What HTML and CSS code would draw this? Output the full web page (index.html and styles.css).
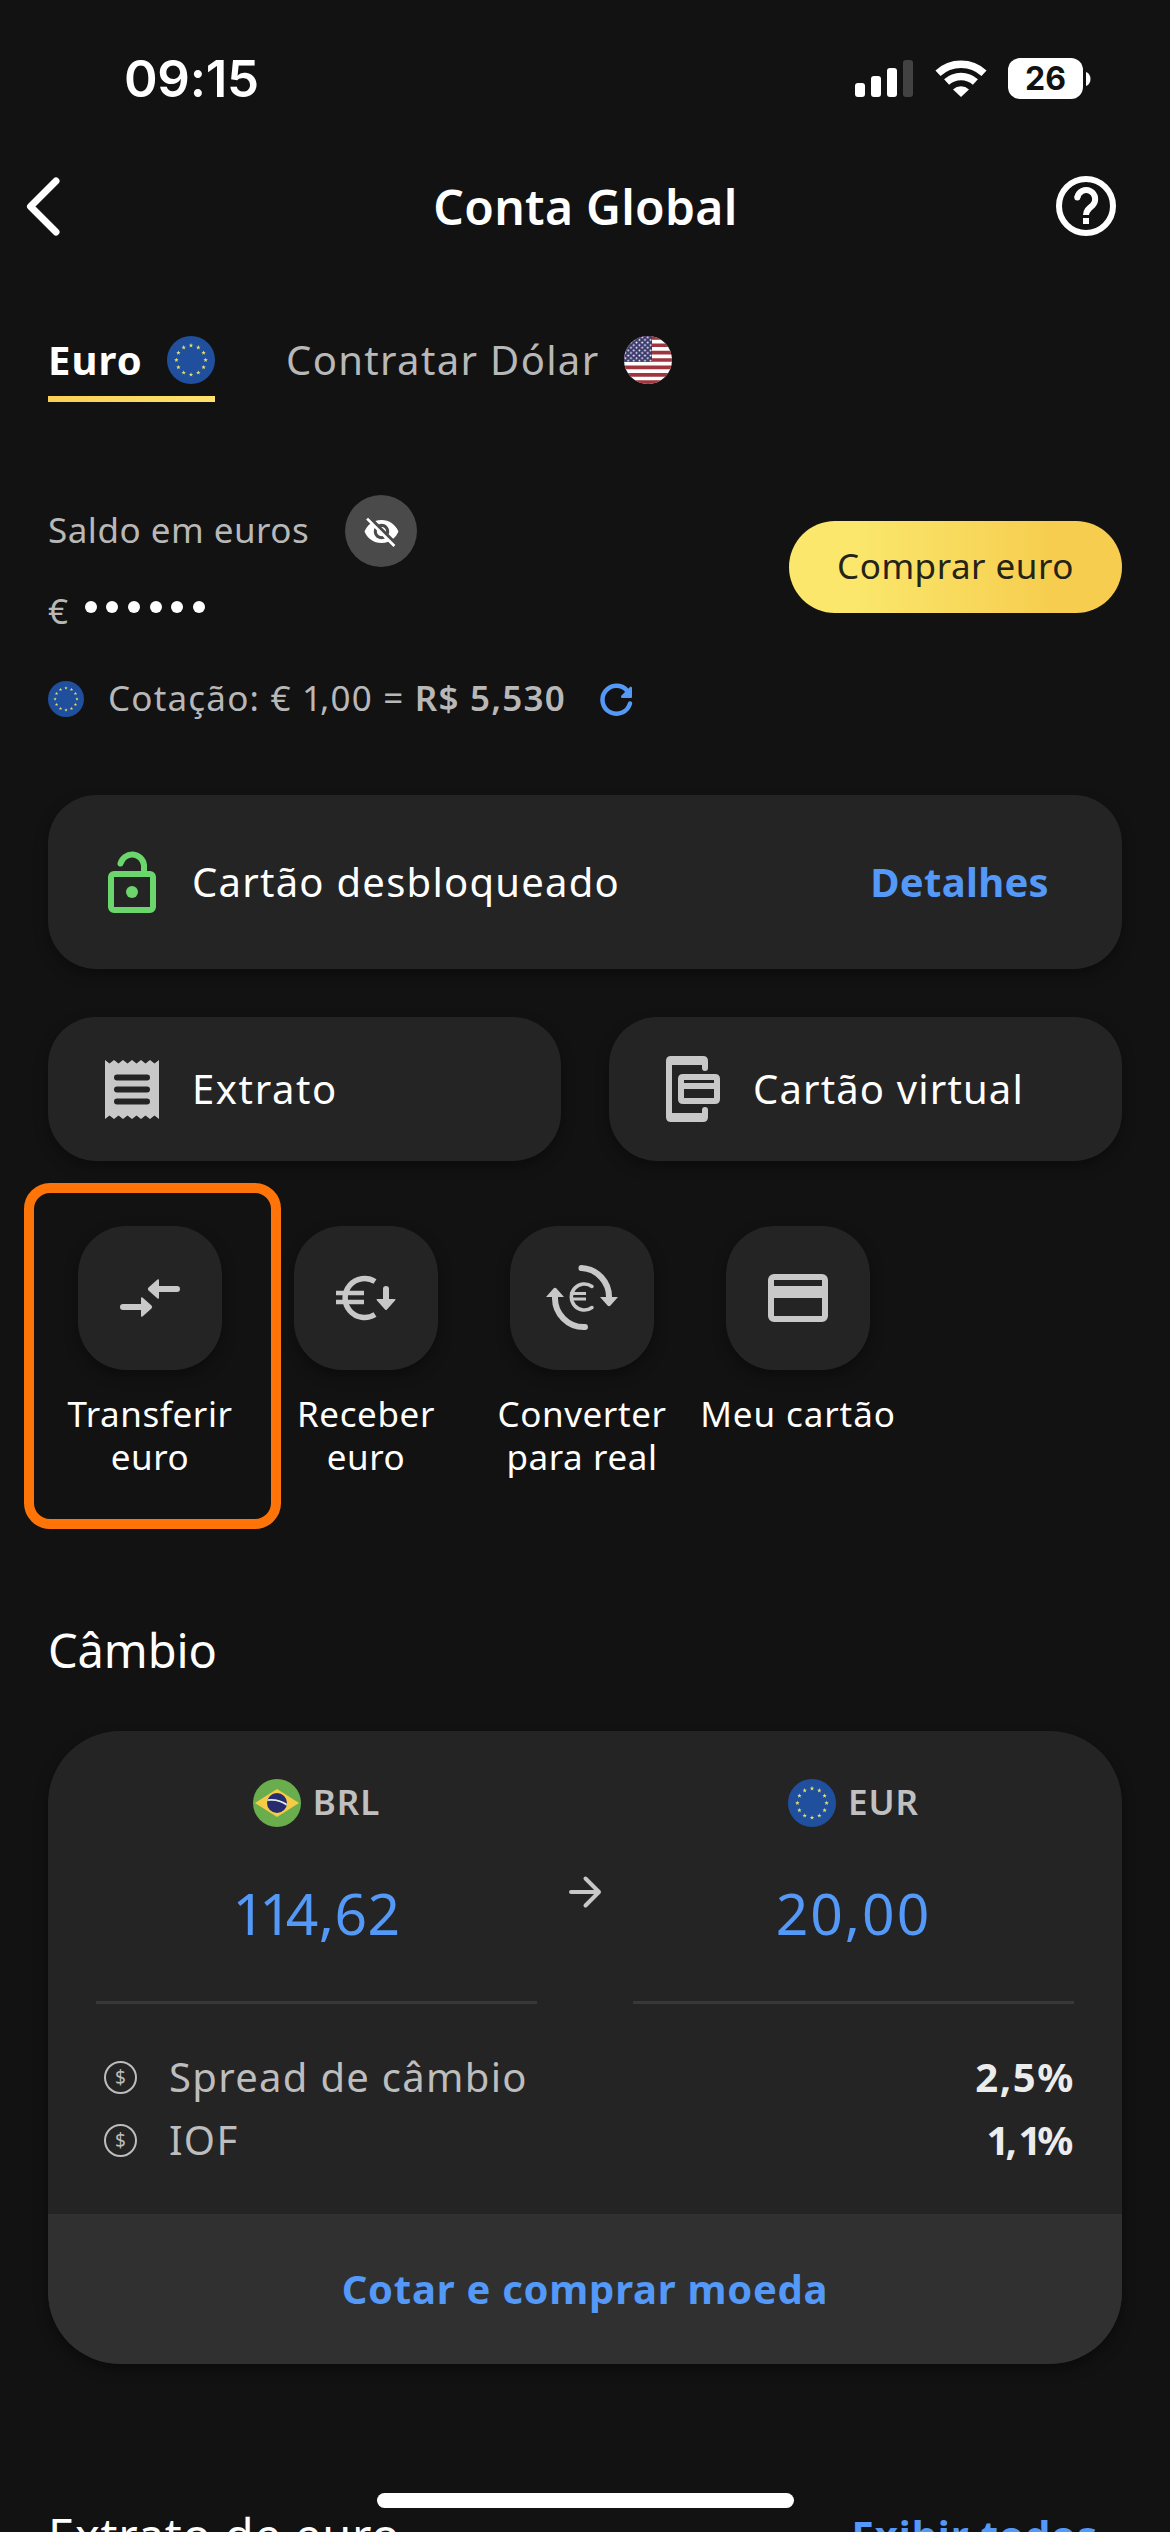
FILE: index.html
```html
<!DOCTYPE html>
<html lang="pt-BR">
<head>
<meta charset="utf-8">
<title>Conta Global</title>
<link rel="stylesheet" href="styles.css">
</head>
<body>
<svg width="0" height="0" class="defs" aria-hidden="true">
  <defs>
    <path id="star" fill="#e3e16b" d="M0-2.3.6-.7 2.2-.7.9.4 1.4 2 0 1-1.4 2-.9.4-2.2-.7-.6-.7z"/>
    <symbol id="eu" viewBox="0 0 48 48">
      <circle cx="24" cy="24" r="24" fill="#20509d"/>
      <use href="#star" x="24" y="9.4"/><use href="#star" x="31.3" y="11.4"/><use href="#star" x="36.6" y="16.7"/>
      <use href="#star" x="38.6" y="24"/><use href="#star" x="36.6" y="31.3"/><use href="#star" x="31.3" y="36.6"/>
      <use href="#star" x="24" y="38.6"/><use href="#star" x="16.7" y="36.6"/><use href="#star" x="11.4" y="31.3"/>
      <use href="#star" x="9.4" y="24"/><use href="#star" x="11.4" y="16.7"/><use href="#star" x="16.7" y="11.4"/>
    </symbol>
    <clipPath id="round"><circle cx="24" cy="24" r="24"/></clipPath>
    <clipPath id="globe"><circle cx="24" cy="24" r="10"/></clipPath>
    <pattern id="stars" width="5.6" height="5.2" patternUnits="userSpaceOnUse">
      <circle cx="1.4" cy="1.4" r=".95" fill="#fff"/><circle cx="4.2" cy="4" r=".95" fill="#fff"/>
    </pattern>
  </defs>
</svg>

<div class="status">
  <span class="time">09:15</span>
  <div class="status-icons">
    <svg width="58" height="38" viewBox="0 0 58 38" fill="#fff"><rect y="23" width="10" height="14" rx="3"/><rect x="16" y="16" width="10" height="21" rx="3"/><rect x="32" y="8" width="10" height="29" rx="3"/><rect x="48" width="10" height="37" rx="3" fill="#424242"/></svg>
    <svg class="wifi" width="52" height="38" viewBox="0 0 52 38" fill="none" stroke="#fff"><path stroke-width="7.5" d="M3 13.2a34 34 0 0 1 46 0"/><path stroke-width="7.5" d="M11.6 22a21.5 21.5 0 0 1 28.8 0"/><path fill="#fff" stroke="none" d="M26 37 18 29.4a11.8 11.8 0 0 1 16 0z"/></svg>
    <span class="battery">26</span>
    <svg class="nub" width="5" height="14" viewBox="0 0 5 14" fill="#fff"><path d="M0 0c6 2 6 12 0 14z"/></svg>
  </div>
</div>

<header class="header">
  <svg width="36" height="60" viewBox="0 0 36 60" fill="none" stroke="#fff" stroke-width="7" stroke-linecap="round" stroke-linejoin="round"><path d="M31 5 5.500 30.500 31 56"/></svg>
  <h1>Conta Global</h1>
  <svg width="60" height="60" viewBox="-30 -30 60 60"><circle r="27" fill="none" stroke="#fff" stroke-width="6"/><path d="M-8.700-8.500A9 9 0 1 1 6.500-.500C3 2.500 0 4.500 0 9" fill="none" stroke="#fff" stroke-width="6"/><circle cx="-8.700" cy="-8.500" r="3" fill="#fff"/><path d="M-3 12h6v6h-6z" fill="#fff"/></svg>
</header>

<main>
  <nav class="tabs">
    <div class="tab active"><span>Euro</span><svg width="48" height="48"><use href="#eu"/></svg></div>
    <div class="tab"><span>Contratar Dólar</span>
      <svg width="48" height="48" viewBox="0 0 48 48"><g clip-path="url(#round)"><path fill="#fff" d="M0 0h48v48H0z"/><path stroke="#a0343f" stroke-width="3.700" d="M0 1.850h48M0 9.230h48M0 16.600h48M0 24h48M0 31.400h48M0 38.800h48M0 46.200h48"/><path fill="#3c3b6e" d="M0 0h28v25.700H0z"/><path fill="url(#stars)" d="M0 0h28v25.700H0z"/></g></svg>
    </div>
  </nav>

  <section class="balance">
    <div>
      <div class="balance-label"><span>Saldo em euros</span>
        <i class="eye"><svg width="37" height="37" viewBox="0 0 24 24" fill="#fff"><path d="M12 7c2.76 0 5 2.24 5 5 0 .65-.13 1.26-.36 1.83l2.92 2.92c1.51-1.26 2.7-2.89 3.43-4.75-1.73-4.39-6-7.5-11-7.5-1.4 0-2.74.25-3.98.7l2.16 2.16C10.74 7.13 11.35 7 12 7zM2 4.27l2.28 2.28.46.46C3.08 8.3 1.78 10.02 1 12c1.73 4.39 6 7.5 11 7.5 1.55 0 3.03-.3 4.38-.84l.42.42L19.73 22 21 20.73 3.27 3 2 4.27zM7.53 9.8l1.55 1.55c-.05.21-.08.43-.08.65 0 1.66 1.34 3 3 3 .22 0 .44-.03.65-.08l1.55 1.55c-.67.33-1.41.53-2.2.53-2.76 0-5-2.24-5-5 0-.79.2-1.53.53-2.2zm4.31-.78l3.15 3.15.02-.16c0-1.66-1.34-3-3-3l-.17.01z"/></svg></i>
      </div>
      <div class="amount-hidden"><span>€</span><i></i><i></i><i></i><i></i><i></i><i></i></div>
    </div>
    <button class="buy">Comprar euro</button>
  </section>

  <div class="quote">
    <svg width="36" height="36"><use href="#eu"/></svg>
    <span>Cotação: € <em>1</em>,00 = <b>R$ 5,530</b></span>
    <svg width="48" height="48" viewBox="0 0 48 48"><path d="M38 28.500A14 14 0 1 1 35 15.500" fill="none" stroke="#5499f7" stroke-width="4.500" stroke-linecap="round"/><path d="M38.500 11.500q1.500 0 1.500 1.500v9q0 1-1 1h-8.500q-2.500-.500-1-2.500z" fill="#5499f7"/></svg>
  </div>

  <section class="card lock-card">
    <svg width="72" height="72" viewBox="0 0 72 72" fill="none" stroke="#6ad66b" stroke-width="6"><rect x="15" y="28" width="42" height="36" rx="3"/><path stroke-linecap="round" d="M24.500 17.500A12 12 0 0 1 48 19v8"/><circle cx="36" cy="46" r="6" fill="#6ad66b" stroke="none"/></svg>
    <span class="desb">Cartão desbloqueado</span>
    <a>Detalhes</a>
  </section>

  <section class="pair">
    <div class="card">
      <svg width="72" height="72" viewBox="0 0 72 72"><path fill="#c8c8c8" d="M9 7l4.500 3.500L18 7l4.500 3.500L27 7l4.500 3.500L36 7l4.500 3.500L45 7l4.500 3.500L54 7l4.500 3.500L63 7v59l-4.500-3.500L54 66l-4.500-3.500L45 66l-4.500-3.500L36 66l-4.500-3.500L27 66l-4.500-3.500L18 66l-4.500-3.500L9 66z"/><path stroke="#242424" stroke-width="6" stroke-linecap="round" d="M21 24.500h30M21 36.500h30M21 48.500h30"/></svg>
      <span class="extr">Extrato</span>
    </div>
    <div class="card">
      <svg width="72" height="72" viewBox="0 0 72 72" fill="#c8c8c8"><path d="M14 3h32q5 0 5 5v7q0 3-3 3t-3-3v-3H15v48h30v-3q0-3 3-3t3 3v7q0 5-5 5H14q-5 0-5-5V8q0-5 5-5z"/><path fill-rule="evenodd" d="M26 21h32q5 0 5 5v20q0 5-5 5H26q-5 0-5-5V26q0-5 5-5zm1 6v3h30v-3zm0 9v9h30v-9z"/></svg>
      <span>Cartão virtual</span>
    </div>
  </section>

  <section class="actions">
    <div class="action picked">
      <i class="tile"><svg width="72" height="72" viewBox="0 0 72 72" fill="#c8c8c8"><path stroke="#c8c8c8" stroke-width="6" stroke-linecap="round" d="M9 45h20M43 27h20"/><path d="M27 36.500q0-2 1.500-1l9 8q1.500 1.500 0 3l-9 8q-1.500 1-1.500-1zM45 18.500q0-2-1.500-1l-9 8q-1.500 1.500 0 3l9 8q1.500 1 1.500-1z"/></svg></i>
      <span>Transferir<br>euro</span>
    </div>
    <div class="action">
      <i class="tile"><svg width="72" height="72" viewBox="0 0 72 72" fill="none" stroke="#c8c8c8"><path stroke-width="5.500" d="M45 19.500A19.500 19.500 0 1 0 45 52.500"/><path stroke-width="4.500" d="M6 31h28M6 40h28"/><path stroke-width="6" stroke-linecap="round" d="M56 27v11"/><path fill="#c8c8c8" stroke="none" d="M47.500 37h17q2 0 .5 1.500l-8 9q-1 1-2 0l-8-9q-1.500-1.500.5-1.500z"/></svg></i>
      <span>Receber<br>euro</span>
    </div>
    <div class="action">
      <i class="tile"><svg width="72" height="72" viewBox="0 0 72 72" fill="none" stroke="#c8c8c8"><path stroke-width="6" stroke-linecap="round" d="M35.500 6A29 29 0 0 1 63 36M39 65A29 29 0 0 1 9 35"/><path fill="#c8c8c8" stroke="none" d="M54 35h18l-7.500 8.500q-1.500 1.500-3 0zM0 35h18l-7.500-8.500q-1.500-1.500-3 0z"/><path stroke-width="3.500" stroke-linecap="round" d="M46 24.500A13 13 0 1 0 46 45.500"/><path stroke-width="2.800" d="M24 31.500h16M24 37h16"/></svg></i>
      <span>Converter<br>para real</span>
    </div>
    <div class="action">
      <i class="tile"><svg width="72" height="72" viewBox="0 0 72 72"><rect x="9" y="15" width="54" height="42" rx="3" fill="none" stroke="#c8c8c8" stroke-width="6"/><path fill="#c8c8c8" d="M9 24h54v12H9z"/></svg></i>
      <span class="mine">Meu cartão</span>
    </div>
  </section>

  <h2>Câmbio</h2>
  <section class="exchange">
    <div class="rates">
      <div class="rate">
        <div class="currency"><svg width="48" height="48" viewBox="0 0 48 48"><circle cx="24" cy="24" r="24" fill="#6aad4d"/><path fill="#f6cb46" d="M2 24 24 10l22 14-22 14z"/><circle cx="24" cy="24" r="10" fill="#272c70"/><path clip-path="url(#globe)" d="M12 21.500q14-2.500 24 6" fill="none" stroke="#dfeee4" stroke-width="1.800"/></svg><span>BRL</span></div>
        <div class="value brl"><em>11</em>4,62</div>
      </div>
      <svg class="arrow" width="36" height="36" viewBox="0 0 36 36" fill="none" stroke="#c8c8c8" stroke-width="4" stroke-linecap="round" stroke-linejoin="round"><path d="M4 18h28M18.500 4.500 32 18 18.500 31.500"/></svg>
      <div class="rate">
        <div class="currency"><svg width="48" height="48"><use href="#eu"/></svg><span>EUR</span></div>
        <div class="value">20,00</div>
      </div>
    </div>
    <div class="fees">
      <div class="fee"><i class="coin">$</i><span>Spread de câmbio</span><b>2,5%</b></div>
      <div class="fee"><i class="coin">$</i><span>IOF</span><b><em>1</em>,<em>1</em>%</b></div>
    </div>
    <div class="cta">Cotar e comprar moeda</div>
  </section>

  <div class="statement"><h2>Extrato de euro</h2><a>Exibir todos</a></div>
</main>
<div class="home-bar"></div>
</body>
</html>
```
FILE: styles.css
```css
* { box-sizing: border-box; }
html, body { height: 2532px; overflow: hidden; }
body { margin: 0; position: relative; background: #121212; color: #fff; font: 400 40px/1.3 "Noto Sans", sans-serif; }
svg { display: block; flex: none; }
i, em { font-style: normal; }
h1, h2 { margin: 0; }
.defs { position: absolute; }

.status { height: 144px; padding: 58px 79px 0 124px; display: flex; justify-content: space-between; align-items: flex-start; }
.time { font: 600 51px/41px Inter, sans-serif; letter-spacing: -.3px; }
.status-icons { display: flex; align-items: center; height: 41px; }
.wifi { margin: 0 21px 0 22px; }
.battery { width: 75px; height: 41px; border-radius: 12px; background: #fff; color: #121212; font: 700 32px/41px Inter, sans-serif; text-align: center; }
.nub { margin-left: 3px; }

.header { height: 124px; padding: 0 54px 0 25px; display: flex; justify-content: space-between; align-items: center; }
.header h1 { font-size: 48px; font-weight: 600; letter-spacing: .3px; padding: 1px 0 0 54px; line-height: 60px; }

main { padding: 68px 48px 0; }
.tabs { display: flex; gap: 71px; }
.tab { display: flex; align-items: center; gap: 24px; height: 66px; padding-bottom: 18px; color: #b8b8b8; letter-spacing: 1.35px; }
.tab.active { width: 167px; justify-content: space-between; gap: 0; color: #fff; font-weight: 700; letter-spacing: 1.1px; background: linear-gradient(90deg, #fbcf55, #fde26d) bottom / 100% 6px no-repeat; }

.balance { display: flex; justify-content: space-between; margin-top: 93px; font-size: 35px; color: #b8b8b8; letter-spacing: .5px; }
.balance-label { display: flex; align-items: center; gap: 36px; height: 72px; }
.balance-label span { padding-bottom: 3px; }
.eye { width: 72px; height: 72px; border-radius: 50%; background: #4a4a4a; display: grid; place-items: center; }
.amount-hidden { display: flex; align-items: center; gap: 9.7px; height: 51px; margin-top: 18px; }
.amount-hidden span { width: 27px; }
.amount-hidden i { width: 12px; height: 12px; border-radius: 50%; background: #fff; margin-bottom: 7px; }
.buy { width: 333px; height: 92px; margin-top: 26px; padding: 0 0 3px; border: 0; border-radius: 46px; background: linear-gradient(90deg, #fae76c 20%, #f6cd4e 80%); color: #252318; font: inherit; letter-spacing: .5px; }

.quote { display: flex; align-items: center; height: 36px; margin-top: 45px; color: #b8b8b8; font-size: 35px; letter-spacing: 1.2px; }
.quote span { width: 484px; margin: 0 0 3px 24px; white-space: nowrap; }
.quote b { font-weight: 600; }
.quote em { letter-spacing: -2px; }

.card { display: flex; align-items: center; gap: 24px; padding: 0 73px 0 48px; border-radius: 48px; background: #242424; box-shadow: 0 6px 14px rgba(0, 0, 0, .35); letter-spacing: 1.15px; white-space: nowrap; }
.lock-card { height: 174px; margin-top: 78px; }
.desb { flex: 1; letter-spacing: 1.25px; }
.extr { letter-spacing: 1.6px; }
a { color: #5499f7; font-weight: 700; letter-spacing: .3px; }
.pair { display: grid; grid-template-columns: 1fr 1fr; gap: 48px; margin-top: 48px; }
.pair .card { height: 144px; padding-right: 20px; }

.actions { display: flex; margin: 22px 0 0 -24px; }
.action { display: flex; flex-direction: column; align-items: center; gap: 22px; width: 216px; height: 295px; padding-top: 43px; font-size: 35px; line-height: 43px; text-align: center; letter-spacing: .6px; white-space: nowrap; }
.action.picked { width: 257px; height: 346px; margin-right: -23px; padding-top: 33px; padding-right: 5px; border: 10px solid #ff7409; border-radius: 26px; }
.tile { flex: none; width: 144px; height: 144px; border-radius: 48px; background: #242424; display: grid; place-items: center; box-shadow: 0 6px 14px rgba(0, 0, 0, .35); }
.mine { letter-spacing: .9px; }

h2 { font-size: 47px; font-weight: 400; line-height: 60px; }
main > h2 { margin: 91px 0 51px; letter-spacing: -.1px; }

.exchange { border-radius: 72px; overflow: hidden; background: #242424; box-shadow: 0 6px 14px rgba(0, 0, 0, .4); }
.rates { display: grid; grid-template-columns: 441px 96px 441px; padding: 48px 48px 0; }
.rate { height: 225px; border-bottom: 3px solid #383838; text-align: center; }
.currency { display: flex; align-items: center; justify-content: center; gap: 12px; font-size: 35px; font-weight: 600; color: #c0c0c0; letter-spacing: 1px; }
.currency span { padding-bottom: 3px; line-height: 45px; }
.value { margin-top: 51px; font-size: 57px; line-height: 70px; color: #5499f7; letter-spacing: 2px; }
.value.brl { letter-spacing: .4px; }
.value em { letter-spacing: -6px; }
.arrow { margin: 95px auto 0; }
.fees { padding: 41px 48px 43px; }
.fee { display: flex; align-items: center; height: 63px; color: #bdbdbd; letter-spacing: 1.3px; }
.fee span { flex: 1; margin-left: 32px; }
.fee b { color: #ececec; letter-spacing: 1.6px; margin-right: -1px; }
.fee em { letter-spacing: -4px; }
.coin { width: 33px; height: 33px; margin: 2px 0 0 8px; border: 2px solid #bdbdbd; border-radius: 50%; font-size: 19px; line-height: 28px; letter-spacing: 0; text-align: center; }
.cta { height: 150px; background: #303030; color: #5499f7; font-weight: 700; line-height: 149px; text-align: center; letter-spacing: .75px; }

.statement { display: flex; justify-content: space-between; align-items: center; margin-top: 141px; padding-right: 24px; height: 60px; letter-spacing: .8px; }
.statement a { letter-spacing: .9px; }
.home-bar { position: absolute; left: 377px; top: 2493px; width: 417px; height: 15px; border-radius: 8px; background: #fff; }
```
